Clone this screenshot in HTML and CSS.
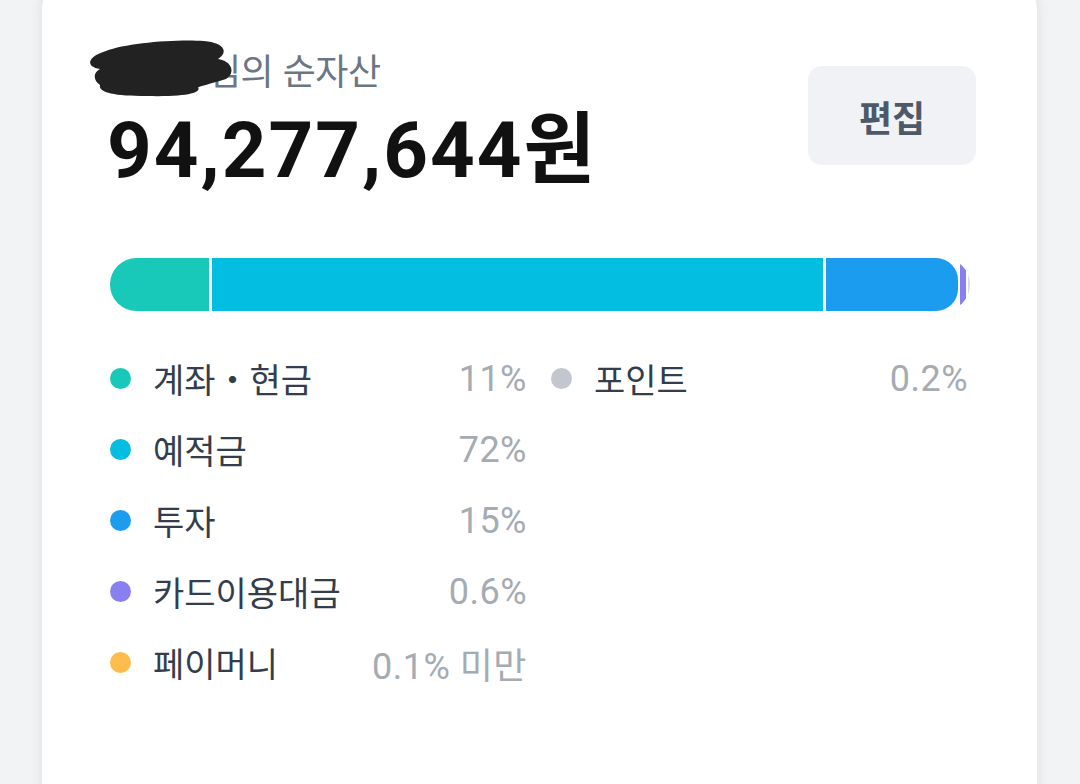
FILE: index.html
```html
<!DOCTYPE html>
<html lang="ko">
<head>
<meta charset="utf-8">
<title>순자산</title>
<link rel="stylesheet" href="styles.css">
</head>
<body>
<main class="card">
  <header class="head">
    <div class="summary">
      <p class="title"><span class="name">홍길동<svg class="blob" viewBox="0 0 150 58" aria-hidden="true"><path d="M20 12 C40 4 90 0 118 2 C140 4 142 14 132 20 C146 22 150 34 140 40 C126 44 120 46 112 48 C116 54 100 58 60 57 C30 57 12 54 14 46 C8 42 6 34 14 30 C0 28 0 18 20 12 Z" fill="#222"/></svg></span>님의 순자산</p>
      <p class="amount">94,277,644원</p>
    </div>
    <button class="edit" type="button">편집</button>
  </header>

  <div class="bar">
    <span class="seg seg-cash" style="width:99px"></span>
    <span class="seg seg-deposit" style="width:611px"></span>
    <span class="seg seg-invest" style="width:132px"></span>
    <span class="seg seg-card" style="width:6px"></span>
    <span class="seg seg-point" style="width:4px"></span>
  </div>

  <div class="legend">
    <ul class="col">
      <li class="item"><span class="dot dot-cash"></span><span class="label">계좌・현금</span><span class="pct">11%</span></li>
      <li class="item"><span class="dot dot-deposit"></span><span class="label">예적금</span><span class="pct">72%</span></li>
      <li class="item"><span class="dot dot-invest"></span><span class="label">투자</span><span class="pct">15%</span></li>
      <li class="item"><span class="dot dot-card"></span><span class="label">카드이용대금</span><span class="pct">0.6%</span></li>
      <li class="item"><span class="dot dot-pay"></span><span class="label">페이머니</span><span class="pct">0.1% 미만</span></li>
    </ul>
    <ul class="col">
      <li class="item"><span class="dot dot-point"></span><span class="label">포인트</span><span class="pct">0.2%</span></li>
    </ul>
  </div>
</main>
</body>
</html>
```

FILE: styles.css
```css
* { box-sizing: border-box; }
html, body { margin: 0; padding: 0; }
body {
  background: #f2f3f5;
  font-family: "Noto Sans CJK KR", "Noto Sans", sans-serif;
  height: 784px;
  overflow: hidden;
}
.card {
  margin: -26px 43px 0 42px;
  height: 840px;
  background: #fff;
  border-radius: 36px 36px 0 0;
  box-shadow: 0 0 14px rgba(0, 0, 0, 0.09);
  padding: 71px 66px 0 68px;
}
.head {
  display: flex;
  justify-content: space-between;
  align-items: flex-start;
}
.summary p { margin: 0; }
.title {
  font-size: 36px;
  line-height: 48px;
  color: #6b7684;
  letter-spacing: -0.5px;
}
.name {
  position: relative;
  display: inline-block;
}
.blob {
  position: absolute;
  left: -24px;
  top: -6px;
  width: 150px;
  height: 58px;
}
.summary .amount {
  font-family: "Roboto", "Noto Sans CJK KR", sans-serif;
  font-weight: 700;
  font-size: 78px;
  line-height: 80px;
  color: #111;
  margin: 18px 0 0 -3px;
  letter-spacing: 2px;
}
.edit {
  margin-top: 21px;
  margin-right: -5px;
  width: 168px;
  height: 99px;
  border: 0;
  border-radius: 14px;
  background: #f0f2f5;
  color: #4e5968;
  font-family: "Noto Sans CJK KR", sans-serif;
  font-weight: 600;
  font-size: 36px;
}
.bar {
  margin-top: 67px;
  width: 860px;
  height: 53px;
  border-radius: 27px;
  overflow: hidden;
  display: flex;
  gap: 3px;
}
.seg { display: block; height: 100%; flex: none; }
.seg-cash { background: #18c8b8; }
.seg-deposit { background: #03bee0; }
.seg-invest { background: #1c9cee; border-radius: 0 22px 22px 0; }
.seg-card { background: #8a7ff0; border-radius: 0 6px 6px 0; margin-left: -1px; }
.seg-point { background: #d9dce1; border-radius: 0 4px 4px 0; margin-left: -1px; }

.legend {
  margin-top: 32px;
  width: 858px;
  display: grid;
  grid-template-columns: 1fr 1fr;
  column-gap: 24px;
}
.col { list-style: none; margin: 0; padding: 0; }
.item {
  display: flex;
  align-items: center;
  height: 71px;
}
.dot {
  width: 21px;
  height: 21px;
  border-radius: 50%;
  flex: none;
  margin-right: 22px;
}
.dot-cash { background: #18c8b8; }
.dot-deposit { background: #03bee0; }
.dot-invest { background: #1c9cee; }
.dot-card { background: #8a7ff0; }
.dot-pay { background: #fdbd4e; }
.dot-point { background: #c2c6ce; }
.label {
  font-size: 34px;
  color: #333d4b;
  flex: 1;
  white-space: nowrap;
}
.pct {
  font-family: "Roboto", "Noto Sans CJK KR", sans-serif;
  font-size: 36px;
  color: #a5abb3;
  letter-spacing: 0.5px;
  white-space: nowrap;
}
```
